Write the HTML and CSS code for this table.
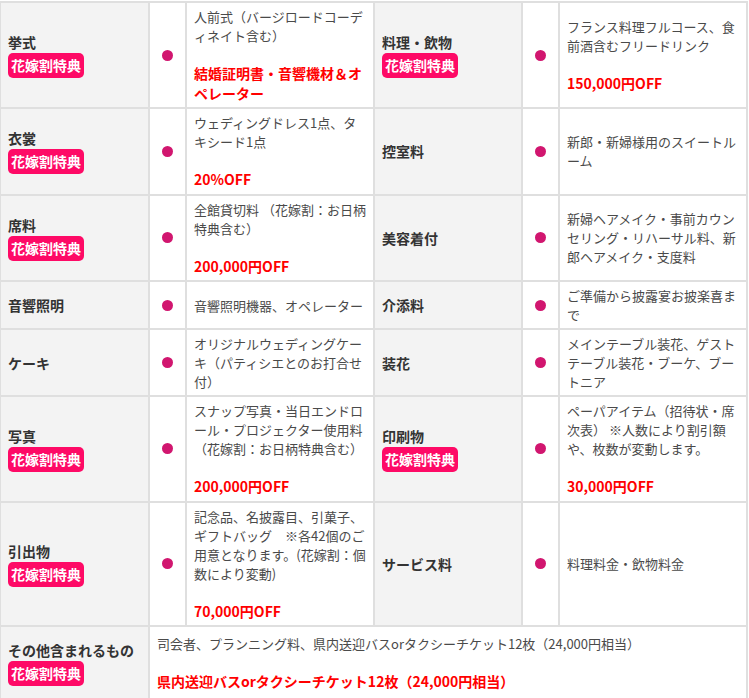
FILE: index.html
```html
<!DOCTYPE html>
<html lang="ja">
<head>
<meta charset="utf-8">
<title>プラン内容</title>
<link rel="stylesheet" href="styles.css">
</head>
<body>
<table class="plan">
  <colgroup>
    <col class="c-label1">
    <col class="c-dot">
    <col class="c-desc">
    <col class="c-label2">
    <col class="c-dot">
    <col class="c-desc">
  </colgroup>
  <tbody>
    <tr>
      <th class="label"><div class="lbl"><span class="name">挙式</span><span class="badge">花嫁割特典</span></div></th>
      <td class="mark"><span class="dot"></span></td>
      <td class="desc">人前式（バージロードコーデ<br>ィネイト含む）<strong class="off">結婚証明書・音響機材＆オ<br>ペレーター</strong></td>
      <th class="label"><div class="lbl"><span class="name">料理・飲物</span><span class="badge">花嫁割特典</span></div></th>
      <td class="mark"><span class="dot"></span></td>
      <td class="desc">フランス料理フルコース、食<br>前酒含むフリードリンク<strong class="off">150,000円OFF</strong></td>
    </tr>
    <tr>
      <th class="label"><div class="lbl"><span class="name">衣裳</span><span class="badge">花嫁割特典</span></div></th>
      <td class="mark"><span class="dot"></span></td>
      <td class="desc">ウェディングドレス1点、タ<br>キシード1点<strong class="off">20%OFF</strong></td>
      <th class="label"><div class="lbl"><span class="name">控室料</span></div></th>
      <td class="mark"><span class="dot"></span></td>
      <td class="desc">新郎・新婦様用のスイートル<br>ーム</td>
    </tr>
    <tr>
      <th class="label"><div class="lbl"><span class="name">席料</span><span class="badge">花嫁割特典</span></div></th>
      <td class="mark"><span class="dot"></span></td>
      <td class="desc">全館貸切料 （花嫁割：お日柄<br>特典含む）<strong class="off">200,000円OFF</strong></td>
      <th class="label"><div class="lbl"><span class="name">美容着付</span></div></th>
      <td class="mark"><span class="dot"></span></td>
      <td class="desc">新婦ヘアメイク・事前カウン<br>セリング・リハーサル料、新<br>郎ヘアメイク・支度料</td>
    </tr>
    <tr>
      <th class="label"><div class="lbl"><span class="name">音響照明</span></div></th>
      <td class="mark"><span class="dot"></span></td>
      <td class="desc">音響照明機器、オペレーター</td>
      <th class="label"><div class="lbl"><span class="name">介添料</span></div></th>
      <td class="mark"><span class="dot"></span></td>
      <td class="desc">ご準備から披露宴お披楽喜ま<br>で</td>
    </tr>
    <tr>
      <th class="label"><div class="lbl"><span class="name">ケーキ</span></div></th>
      <td class="mark"><span class="dot"></span></td>
      <td class="desc">オリジナルウェディングケー<br>キ（パティシエとのお打合せ<br>付）</td>
      <th class="label"><div class="lbl"><span class="name">装花</span></div></th>
      <td class="mark"><span class="dot"></span></td>
      <td class="desc">メインテーブル装花、ゲスト<br>テーブル装花・ブーケ、ブー<br>トニア</td>
    </tr>
    <tr>
      <th class="label"><div class="lbl"><span class="name">写真</span><span class="badge">花嫁割特典</span></div></th>
      <td class="mark"><span class="dot"></span></td>
      <td class="desc">スナップ写真・当日エンドロ<br>ール・プロジェクター使用料<br>（花嫁割：お日柄特典含む）<strong class="off">200,000円OFF</strong></td>
      <th class="label"><div class="lbl"><span class="name">印刷物</span><span class="badge">花嫁割特典</span></div></th>
      <td class="mark"><span class="dot"></span></td>
      <td class="desc">ペーパアイテム（招待状・席<br>次表） ※人数により割引額<br>や、枚数が変動します。<strong class="off">30,000円OFF</strong></td>
    </tr>
    <tr>
      <th class="label"><div class="lbl"><span class="name">引出物</span><span class="badge">花嫁割特典</span></div></th>
      <td class="mark"><span class="dot"></span></td>
      <td class="desc">記念品、名披露目、引菓子、<br>ギフトバッグ　※各42個のご<br>用意となります。(花嫁割：個<br>数により変動)<strong class="off">70,000円OFF</strong></td>
      <th class="label"><div class="lbl"><span class="name">サービス料</span></div></th>
      <td class="mark"><span class="dot"></span></td>
      <td class="desc">料理料金・飲物料金</td>
    </tr>
    <tr>
      <th class="label"><div class="lbl"><span class="name">その他含まれるもの</span><span class="badge">花嫁割特典</span></div></th>
      <td class="desc wide" colspan="5">司会者、プランニング料、県内送迎バスorタクシーチケット12枚（24,000円相当）<strong class="off">県内送迎バスorタクシーチケット12枚（24,000円相当）</strong></td>
    </tr>
  </tbody>
</table>
</body>
</html>
```

FILE: styles.css
```css
html, body {
  margin: 0;
  padding: 0;
  background: #ffffff;
}

body {
  font-family: "Noto Sans CJK JP", "Noto Sans", sans-serif;
  color: #4a4a4a;
}

.plan {
  width: 748px;
  margin-top: 1px;
  table-layout: fixed;
  border-collapse: separate;
  border-spacing: 0;
  border-top: 2px solid #dfdfdf;
  border-left: 1px solid #dfdfdf;
}

.c-label1 { width: 149px; }
.c-dot { width: 37px; }
.c-desc { width: 188px; }
.c-label2 { width: 148px; }

.plan th,
.plan td {
  border-right: 2px solid #dfdfdf;
  border-bottom: 2px solid #dfdfdf;
  vertical-align: middle;
  text-align: left;
}

.label {
  background: #f3f3f3;
  padding: 13px 7px;
  font-weight: bold;
  font-size: 14px;
  color: #333333;
}

.lbl {
  display: flex;
  flex-direction: column;
  align-items: flex-start;
}

.name {
  line-height: 20px;
}

.badge {
  background: #fe0a66;
  color: #ffffff;
  font-weight: bold;
  font-size: 14px;
  line-height: 25px;
  padding: 0 3px;
  border-radius: 5px;
  margin-top: 1px;
}

.mark {
  padding: 0;
  background: #ffffff;
}

.dot {
  display: block;
  width: 11px;
  height: 11px;
  margin: 0 auto;
  border-radius: 50%;
  background: #d1166f;
}

.desc {
  padding: 4px 4px 4px 7px;
  font-size: 13px;
  line-height: 19px;
  color: #4a4a4a;
  white-space: nowrap;
  background: #ffffff;
}

.off {
  display: block;
  margin-top: 19px;
  color: #ff0000;
  font-weight: bold;
  font-size: 14px;
  line-height: 19.5px;
}
```
